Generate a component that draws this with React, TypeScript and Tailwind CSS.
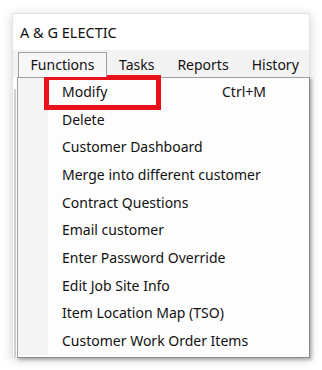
import React from "react";

const items = [
  { label: "Modify", shortcut: "Ctrl+M" },
  { label: "Delete" },
  { label: "Customer Dashboard" },
  { label: "Merge into different customer" },
  { label: "Contract Questions" },
  { label: "Email customer" },
  { label: "Enter Password Override" },
  { label: "Edit Job Site Info" },
  { label: "Item Location Map (TSO)" },
  { label: "Customer Work Order Items" },
];

const tabs = ["Tasks", "Reports", "History"];

export default function App() {
  return (
    <div
      className="h-[370px] w-[322px] overflow-hidden bg-white pl-[12px] pt-[13px] text-[14px] text-[#111]"
      style={{ fontFamily: '"Noto Sans", "Open Sans", sans-serif' }}
    >
      <div className="relative flex h-[345px] w-[298px] flex-col border border-[#e2e2e2] bg-white shadow-[0_2px_10px_rgba(0,0,0,0.18)]">
        {/* title */}
        <div className="flex h-[36px] items-center whitespace-nowrap pl-[7px] text-[14.5px] leading-none">A &amp; G ELECTIC</div>

        {/* menu bar */}
        <div className="flex h-[27px] items-end whitespace-nowrap bg-[#f3f3f3] pl-[5px]">
          <div className="z-10 flex h-[25px] w-[89px] items-center justify-center border border-b-0 border-[#a0a0a0] bg-[#f7f7f7] leading-none">
            Functions
          </div>
          <div className="flex h-[25px] items-center gap-[23px] pl-[12px] leading-none">
            {tabs.map((t) => (
              <span key={t}>{t}</span>
            ))}
          </div>
        </div>

        {/* underlying window body */}
        <div className="flex flex-1">
          <div className="ml-[1px] mt-[12px] w-[2px] border-x border-[#cfcfcf]" />
        </div>

        {/* dropdown */}
        <div className="absolute left-[4px] top-[63px] flex w-[293px] border border-[#a0a0a0] border-r-[#8a8a8a] border-b-[#8a8a8a] bg-[#fdfdfd] pb-[2px] shadow-[2px_2px_3px_rgba(0,0,0,0.25)]">
          <div className="w-[30px] shrink-0 bg-[#f4f4f4]" />
          <div className="flex flex-1 flex-col">
            {items.map((it) => (
              <div key={it.label} className="relative flex h-[27.7px] items-center whitespace-nowrap pl-[14px] leading-none">
                <span className="w-[160px] shrink-0">{it.label}</span>
                {it.shortcut && <span>{it.shortcut}</span>}
                {it.shortcut && (
                  <div className="absolute left-[-4px] top-[-3px] h-[35px] w-[117px] border-[5px] border-[#e8121c]" />
                )}
              </div>
            ))}
          </div>
        </div>
      </div>
    </div>
  );
}
